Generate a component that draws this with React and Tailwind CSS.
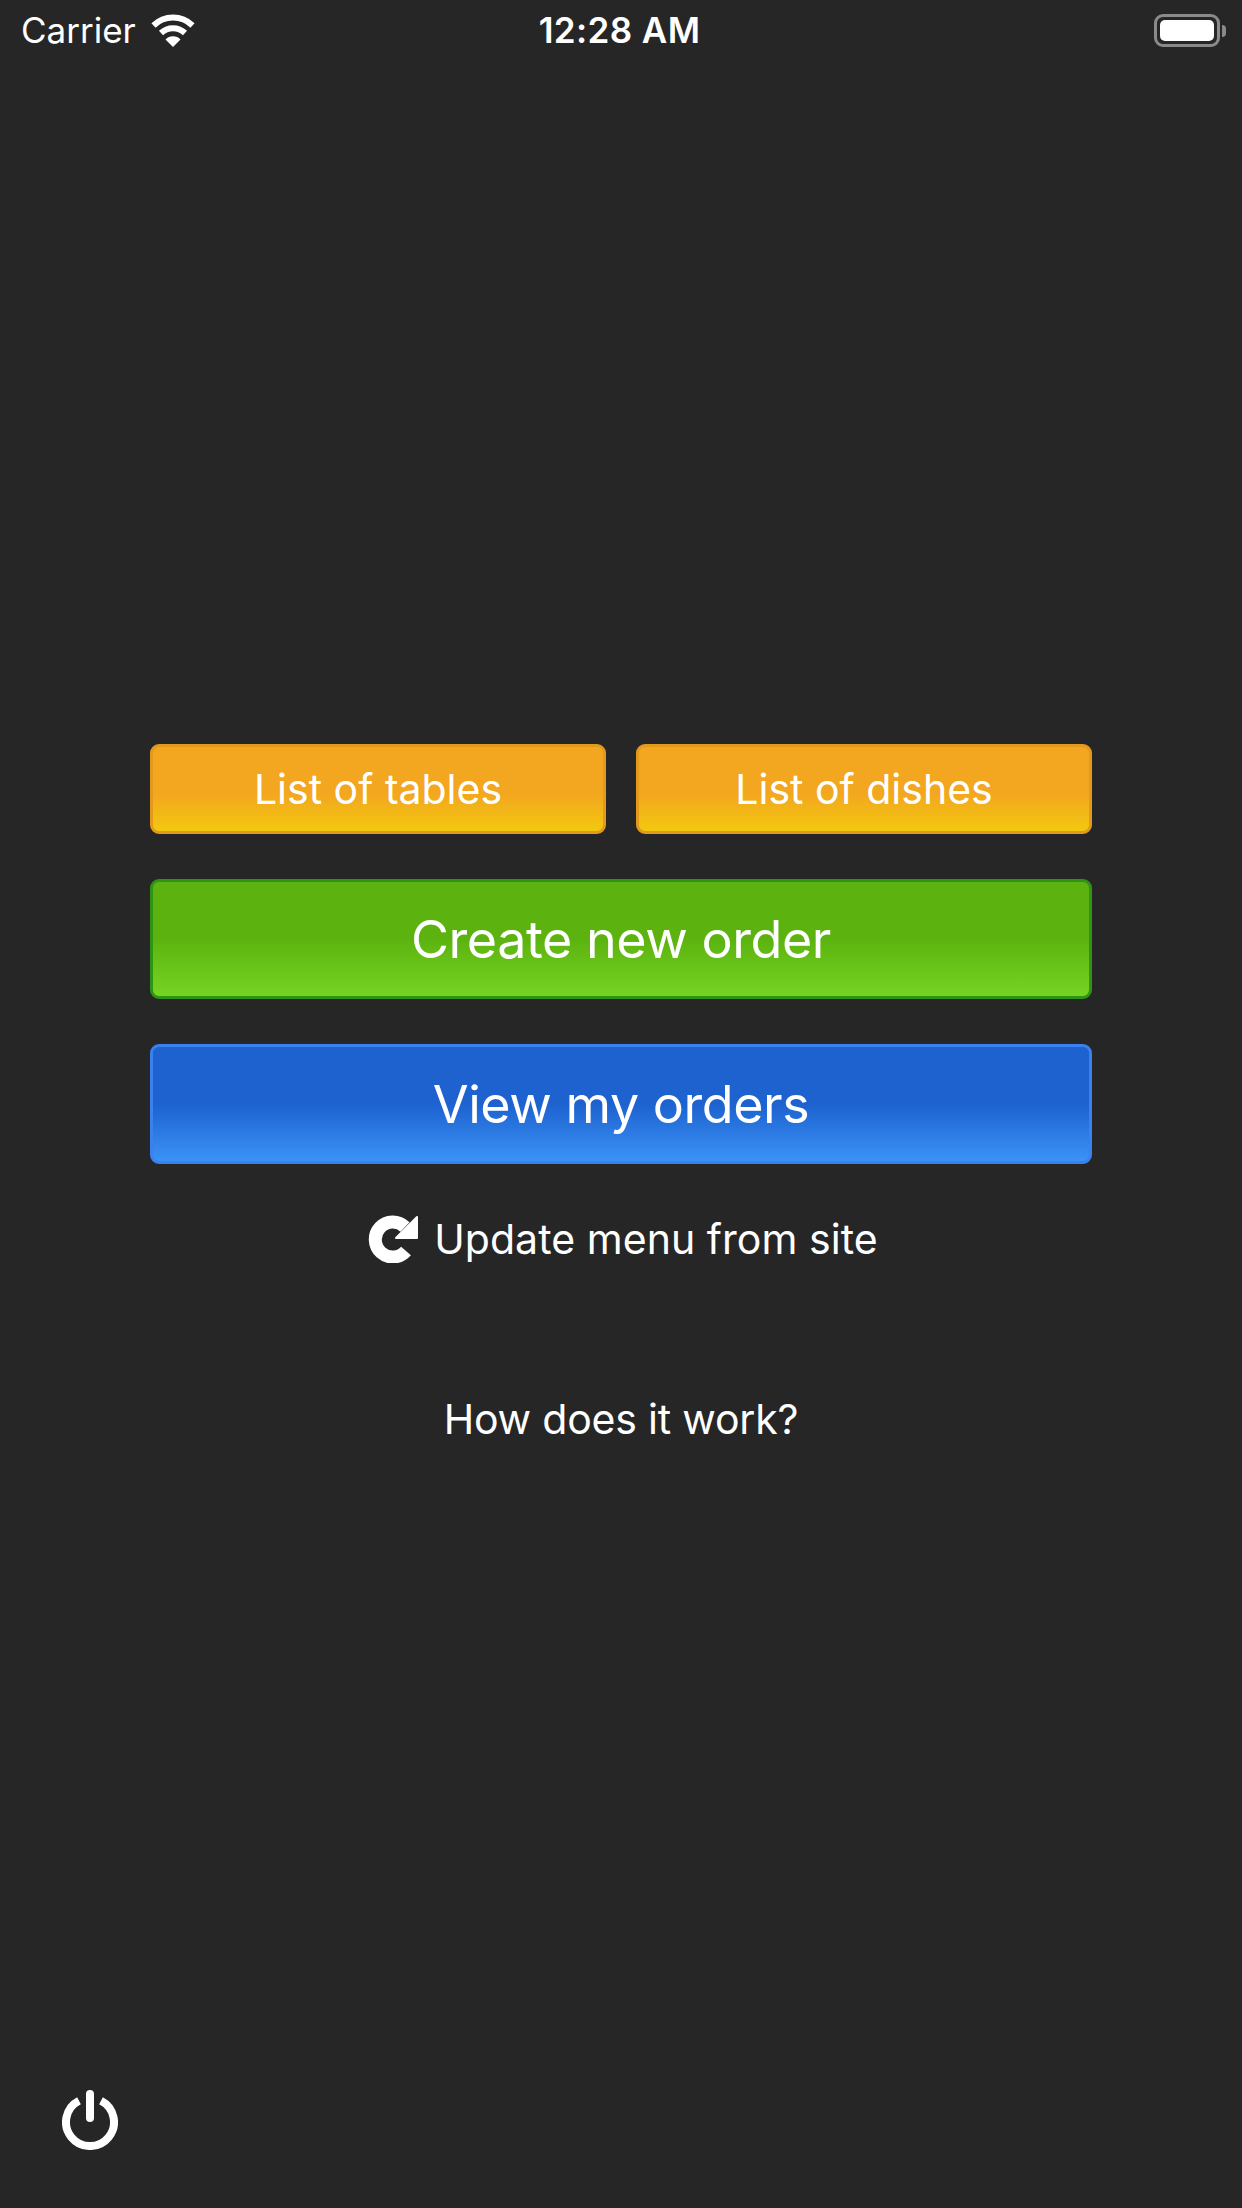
function WifiIcon() {
  return (
    <svg width="44" height="33" viewBox="0 0 44 33" fill="none" stroke="white" strokeWidth="6">
      <path d="M2.5 11.5 A28 28 0 0 1 41.5 11.5" />
      <path d="M10 19 A17.5 17.5 0 0 1 34 19" />
      <path d="M22 33 L14.5 25.5 A10.5 10.5 0 0 1 29.5 25.5 Z" fill="white" stroke="none" />
    </svg>
  );
}

function BatteryIcon() {
  return (
    <div className="flex items-center gap-[2px]">
      <div className="h-[33px] w-[66px] rounded-[9px] border-[3px] border-[#8a8a8a] p-[3px]">
        <div className="h-full w-full rounded-[5px] bg-white" />
      </div>
      <div className="h-[12px] w-[4px] rounded-r-full bg-[#8a8a8a]" />
    </div>
  );
}

function RefreshIcon() {
  return (
    <svg width="50" height="48" viewBox="0 0 50 48" fill="none" stroke="white" strokeWidth="13">
      <path d="M38 36 A17.5 17.5 0 1 1 37 12" />
      <path d="M49 2 V23 H28 Z" fill="white" strokeWidth="2" strokeLinejoin="round" />
    </svg>
  );
}

function PowerIcon() {
  return (
    <svg width="56" height="60" viewBox="0 0 56 60" fill="none" stroke="white" strokeWidth="8">
      <path d="M17 10.7 A24 24 0 1 0 39 10.7" />
      <path d="M28 4 V28" strokeLinecap="round" />
    </svg>
  );
}

function Button({ color, className, children }) {
  return (
    <button className={`flex items-center justify-center rounded-[9px] border-[3px] pt-[1px] text-white ${color} ${className}`}>
      {children}
    </button>
  );
}

export default function App() {
  return (
    <div className="flex h-[2208px] w-[1242px] flex-col bg-[#262626] font-['Inter',sans-serif] font-[375] text-white">
      <div className="flex h-[60px] items-center justify-between pl-[21px] pr-[16px] pt-[1px]">
        <div className="flex w-[400px] items-center gap-[15px]">
          <span className="text-[35px] leading-none">Carrier</span>
          <WifiIcon />
        </div>
        <span className="text-[35px] font-semibold leading-none tracking-[0.4px]">12:28 AM</span>
        <div className="flex w-[408px] justify-end">
          <BatteryIcon />
        </div>
      </div>

      <div className="flex flex-col px-[150px] pt-[684px]">
        <div className="flex gap-[30px]">
          <Button
            color="border-[#e29a1d] bg-[linear-gradient(#f3a61f_0%,#f3a61f_55%,#f2c80f_100%)]"
            className="h-[90px] flex-1 text-[41px]"
          >
            List of tables
          </Button>
          <Button
            color="border-[#e29a1d] bg-[linear-gradient(#f3a61f_0%,#f3a61f_55%,#f2c80f_100%)]"
            className="h-[90px] flex-1 text-[41px]"
          >
            List of dishes
          </Button>
        </div>
        <Button
          color="border-[#2f9416] bg-[linear-gradient(#5cb30f_0%,#5cb30f_50%,#76d423_100%)]"
          className="mt-[45px] h-[120px] text-[52px] tracking-[-0.45px]"
        >
          Create new order
        </Button>
        <Button
          color="border-[#3a80ee] bg-[linear-gradient(#1d62cf_0%,#1d62cf_50%,#3b92f7_100%)]"
          className="mt-[45px] h-[120px] text-[52px] tracking-[-0.45px]"
        >
          View my orders
        </Button>

        <div className="mt-[50px] flex items-center justify-center gap-[16px] pl-[4px]">
          <RefreshIcon />
          <span className="text-[41px] leading-[50px] tracking-[0.05px]">Update menu from site</span>
        </div>
        <div className="mt-[130px] text-center text-[41px] leading-[50px] tracking-[-0.2px]">How does it work?</div>
      </div>

      <div className="mt-auto pb-[58px] pl-[62px]">
        <PowerIcon />
      </div>
    </div>
  );
}
